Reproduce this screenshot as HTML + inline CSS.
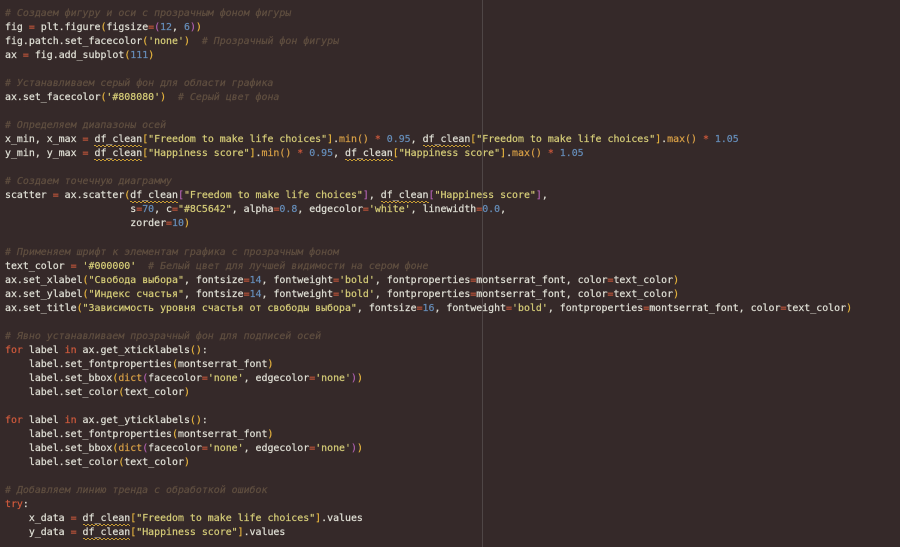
<!DOCTYPE html>
<html lang="ru"><head><meta charset="utf-8"><title>code</title>
<style>
html,body{margin:0;padding:0;background:#352929;width:900px;height:547px;overflow:hidden}
pre{position:absolute;left:5px;top:7px;margin:0;font:9.91px/14.03px "DejaVu Sans Mono","Liberation Mono",monospace;color:#e0e0d6;filter:blur(.35px);white-space:pre;-webkit-text-stroke:.2px currentColor}
#v{position:absolute;left:482px;top:0;width:1px;height:547px;background:#4f4646}
i{color:#604f40;font-style:italic}
b{font-weight:normal}
.o{color:#d05a3c}.n{color:#668eba}.s{color:#d6cd78}.g{color:#e6b43e}.p{color:#ae60ae}.m{color:#d9a046}
.w{position:relative;display:inline-block}
.w::after{content:"";position:absolute;left:0;right:0;bottom:0;height:2px;background:
repeating-linear-gradient(90deg,#c79c34 0 2px,transparent 2px 4px) 0 0/100% 1px no-repeat,
repeating-linear-gradient(90deg,transparent 0 2px,#c79c34 2px 4px) 0 1px/100% 1px no-repeat}
</style></head><body>
<div id="v"></div>
<pre><i># Создаем фигуру и оси с прозрачным фоном фигуры</i>
fig <b class="o">=</b> plt.figure<b class="g">(</b>figsize<b class="o">=</b><b class="p">(</b><b class="n">12</b>, <b class="n">6</b><b class="p">)</b><b class="g">)</b>
fig.patch.set_facecolor<b class="g">(</b><b class="s">'none'</b><b class="g">)</b>  <i># Прозрачный фон фигуры</i>
ax <b class="o">=</b> fig.add_subplot<b class="g">(</b><b class="n">111</b><b class="g">)</b>

<i># Устанавливаем серый фон для области графика</i>
ax.set_facecolor<b class="g">(</b><b class="s">'#808080'</b><b class="g">)</b>  <i># Серый цвет фона</i>

<i># Определяем диапазоны осей</i>
x_min, x_max <b class="o">=</b> <span class="w">df_clean</span><b class="g">[</b><b class="s">"Freedom to make life choices"</b><b class="g">]</b>.<b class="m">min()</b> <b class="o">*</b> <b class="n">0.95</b>, <span class="w">df_clean</span><b class="g">[</b><b class="s">"Freedom to make life choices"</b><b class="g">]</b>.<b class="m">max()</b> <b class="o">*</b> <b class="n">1.05</b>
y_min, y_max <b class="o">=</b> <span class="w">df_clean</span><b class="g">[</b><b class="s">"Happiness score"</b><b class="g">]</b>.<b class="m">min()</b> <b class="o">*</b> <b class="n">0.95</b>, <span class="w">df_clean</span><b class="g">[</b><b class="s">"Happiness score"</b><b class="g">]</b>.<b class="m">max()</b> <b class="o">*</b> <b class="n">1.05</b>

<i># Создаем точечную диаграмму</i>
scatter <b class="o">=</b> ax.scatter<b class="g">(</b><span class="w">df_clean</span><b class="p">[</b><b class="s">"Freedom to make life choices"</b><b class="p">]</b>, <span class="w">df_clean</span><b class="p">[</b><b class="s">"Happiness score"</b><b class="p">]</b>,
                     s<b class="o">=</b><b class="n">70</b>, c<b class="o">=</b><b class="s">"#8C5642"</b>, alpha<b class="o">=</b><b class="n">0.8</b>, edgecolor<b class="o">=</b><b class="s">'white'</b>, linewidth<b class="o">=</b><b class="n">0.0</b>,
                     zorder<b class="o">=</b><b class="n">10</b><b class="g">)</b>

<i># Применяем шрифт к элементам графика с прозрачным фоном</i>
text_color <b class="o">=</b> <b class="s">'#000000'</b>  <i># Белый цвет для лучшей видимости на сером фоне</i>
ax.set_xlabel<b class="g">(</b><b class="s">"Свобода выбора"</b>, fontsize<b class="o">=</b><b class="n">14</b>, fontweight<b class="o">=</b><b class="s">'bold'</b>, fontproperties<b class="o">=</b>montserrat_font, color<b class="o">=</b>text_color<b class="g">)</b>
ax.set_ylabel<b class="g">(</b><b class="s">"Индекс счастья"</b>, fontsize<b class="o">=</b><b class="n">14</b>, fontweight<b class="o">=</b><b class="s">'bold'</b>, fontproperties<b class="o">=</b>montserrat_font, color<b class="o">=</b>text_color<b class="g">)</b>
ax.set_title<b class="g">(</b><b class="s">"Зависимость уровня счастья от свободы выбора"</b>, fontsize<b class="o">=</b><b class="n">16</b>, fontweight<b class="o">=</b><b class="s">'bold'</b>, fontproperties<b class="o">=</b>montserrat_font, color<b class="o">=</b>text_color<b class="g">)</b>

<i># Явно устанавливаем прозрачный фон для подписей осей</i>
<b class="o">for</b> label <b class="o">in</b> ax.get_xticklabels<b class="g">()</b>:
    label.set_fontproperties<b class="g">(</b>montserrat_font<b class="g">)</b>
    label.set_bbox<b class="g">(</b><b class="m">dict</b><b class="p">(</b>facecolor<b class="o">=</b><b class="s">'none'</b>, edgecolor<b class="o">=</b><b class="s">'none'</b><b class="p">)</b><b class="g">)</b>
    label.set_color<b class="g">(</b>text_color<b class="g">)</b>

<b class="o">for</b> label <b class="o">in</b> ax.get_yticklabels<b class="g">()</b>:
    label.set_fontproperties<b class="g">(</b>montserrat_font<b class="g">)</b>
    label.set_bbox<b class="g">(</b><b class="m">dict</b><b class="p">(</b>facecolor<b class="o">=</b><b class="s">'none'</b>, edgecolor<b class="o">=</b><b class="s">'none'</b><b class="p">)</b><b class="g">)</b>
    label.set_color<b class="g">(</b>text_color<b class="g">)</b>

<i># Добавляем линию тренда с обработкой ошибок</i>
<b class="o">try</b>:
    x_data <b class="o">=</b> <span class="w">df_clean</span><b class="g">[</b><b class="s">"Freedom to make life choices"</b><b class="g">]</b>.values
    y_data <b class="o">=</b> <span class="w">df_clean</span><b class="g">[</b><b class="s">"Happiness score"</b><b class="g">]</b>.values</pre>
</body></html>
